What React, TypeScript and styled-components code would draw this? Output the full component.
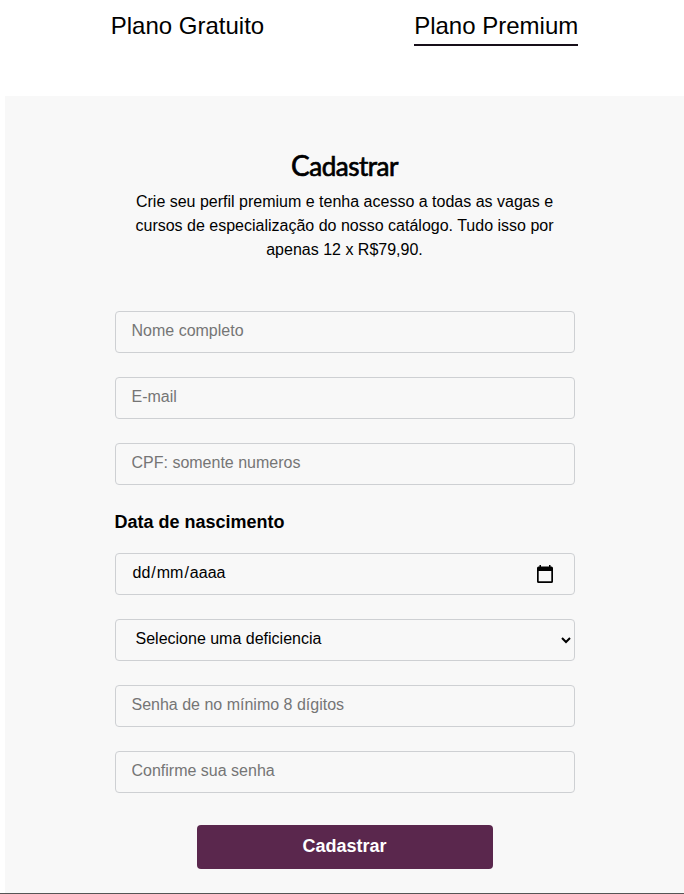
import React from "react";
import styled, { createGlobalStyle, css } from "styled-components";

const GlobalStyle = createGlobalStyle`
  *, *::before, *::after { box-sizing: border-box; }
  html, body { margin: 0; padding: 0; background: #fff; }
  body {
    overflow: hidden;
    font-family: "Liberation Sans", Arial, Helvetica, sans-serif;
    color: #000;
  }
`;

const Page = styled.div`
  height: 894px;
  padding-left: 5px;
  display: flex;
  flex-direction: column;
`;

const Tabs = styled.nav`
  height: 96px;
  padding-top: 8px;
  display: flex;
  justify-content: center;
  align-items: flex-start;
  gap: 150px;
`;

const Tab = styled.a<{ $active?: boolean }>`
  height: 38px;
  font-size: 24px;
  line-height: 36px;
  white-space: nowrap;
  border-bottom: 2px solid ${(p) => (p.$active ? "#170f19" : "transparent")};
`;

const Panel = styled.main`
  flex: 1;
  background: #f8f8f8;
  padding-top: 52px;
  display: flex;
  flex-direction: column;
  align-items: center;
`;

const Title = styled.h1`
  margin: 0;
  height: 42px;
  font-family: Lato, sans-serif;
  font-size: 26px;
  font-weight: 400;
  line-height: 36px;
  letter-spacing: -0.5px;
  -webkit-text-stroke: 0.7px #000;
  &::first-letter { font-size: 28px; line-height: 30px; }
`;

const Intro = styled.p`
  margin: 0 0 49px;
  width: 440px;
  text-align: center;
  font-size: 16px;
  line-height: 24px;
`;

const Form = styled.form`
  width: 460px;
  display: flex;
  flex-direction: column;
  gap: 24px;
`;

const fieldBox = css`
  width: 100%;
  height: 42px;
  border: 1px solid #ced0d3;
  border-radius: 4px;
  background: transparent;
  color: #000;
  font-family: inherit;
  font-size: 16px;
`;

const Input = styled.input`
  ${fieldBox}
  padding: 0 16px 3px;
  &::placeholder { color: #757575; opacity: 1; }
`;

const DateField = styled.div`
  ${fieldBox}
  padding: 0 19.5px 0 16px;
  display: flex;
  align-items: center;
  justify-content: space-between;
`;

const FieldText = styled.span`
  padding-bottom: 3px;
`;

const DatePart = styled.span`
  padding: 0 1px;
`;

const SelectField = styled.div`
  ${fieldBox}
  padding: 0 2.5px 0 20px;
  display: flex;
  align-items: center;
  justify-content: space-between;
`;

const DateGroup = styled.div`
  display: flex;
  flex-direction: column;
`;

const Label = styled.label`
  height: 44px;
  font-size: 18px;
  font-weight: 700;
  line-height: 26px;
`;

const Submit = styled.button`
  align-self: center;
  width: 296px;
  height: 44px;
  margin-top: 8px;
  padding: 0 0 2px;
  border: 0;
  border-radius: 4px;
  background: #5a274d;
  color: #fff;
  font-family: inherit;
  font-size: 18px;
  font-weight: 700;
`;

const Divider = styled.div`
  height: 1px;
  margin-left: -5px;
  background: #555;
`;

const CalendarIcon = () => (
  <svg width="18" height="20" viewBox="0 0 18 20" aria-hidden="true">
    <path
      fill="#000"
      fillRule="evenodd"
      d="M3.5 1h1.5v1.5h8V1h1.5v1.5h.9Q17 2.5 17 4v13.4Q17 19 15.4 19H2.6Q1 19 1 17.4V4Q1 2.5 2.6 2.5H3.5zM2.7 7v10.3h12.6V7z"
    />
  </svg>
);

const ChevronIcon = () => (
  <svg width="10" height="8" viewBox="0 0 10 8" aria-hidden="true">
    <path d="M1 2l4 4 4-4" fill="none" stroke="#000" strokeWidth="2" />
  </svg>
);

export default function App() {
  return (
    <>
      <GlobalStyle />
      <Page>
        <Tabs>
          <Tab>Plano Gratuito</Tab>
          <Tab $active>Plano Premium</Tab>
        </Tabs>
        <Panel>
          <Title>Cadastrar</Title>
          <Intro>
            Crie seu perfil premium e tenha acesso a todas as vagas e cursos de
            especialização do nosso catálogo. Tudo isso por apenas 12 x R$79,90.
          </Intro>
          <Form>
            <Input type="text" placeholder="Nome completo" />
            <Input type="email" placeholder="E-mail" />
            <Input type="text" placeholder="CPF: somente numeros" />
            <DateGroup>
              <Label>Data de nascimento</Label>
              <DateField>
                <FieldText>
                  <DatePart>dd</DatePart>/<DatePart>mm</DatePart>/<DatePart>aaaa</DatePart>
                </FieldText>
                <CalendarIcon />
              </DateField>
            </DateGroup>
            <SelectField role="combobox" aria-expanded={false}>
              <FieldText>Selecione uma deficiencia</FieldText>
              <ChevronIcon />
            </SelectField>
            <Input type="password" placeholder="Senha de no mínimo 8 dígitos" />
            <Input type="password" placeholder="Confirme sua senha" />
            <Submit type="button">Cadastrar</Submit>
          </Form>
        </Panel>
        <Divider />
      </Page>
    </>
  );
}
